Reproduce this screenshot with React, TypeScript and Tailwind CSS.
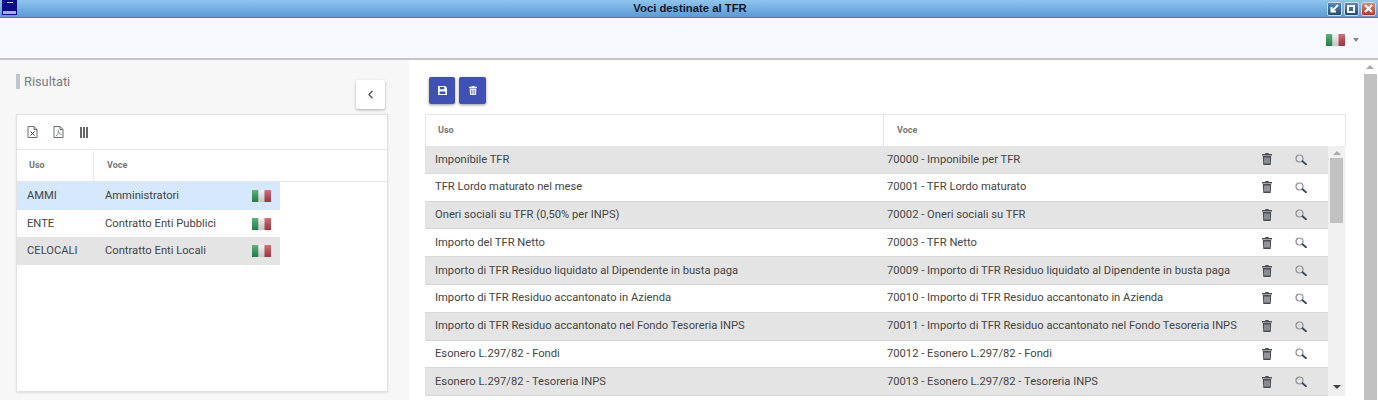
import { ChevronLeft } from 'lucide-react';

const results = [
  { code: 'AMMI', name: 'Amministratori', bg: 'bg-[#d6e8fd]' },
  { code: 'ENTE', name: 'Contratto Enti Pubblici', bg: 'bg-white' },
  { code: 'CELOCALI', name: 'Contratto Enti Locali', bg: 'bg-[#e4e4e4]' },
];

const rows = [
  ['Imponibile TFR', '70000 - Imponibile per TFR'],
  ['TFR Lordo maturato nel mese', '70001 - TFR Lordo maturato'],
  ['Oneri sociali su TFR (0,50% per INPS)', '70002 - Oneri sociali su TFR'],
  ['Importo del TFR Netto', '70003 - TFR Netto'],
  ['Importo di TFR Residuo liquidato al Dipendente in busta paga', '70009 - Importo di TFR Residuo liquidato al Dipendente in busta paga'],
  ['Importo di TFR Residuo accantonato in Azienda', '70010 - Importo di TFR Residuo accantonato in Azienda'],
  ['Importo di TFR Residuo accantonato nel Fondo Tesoreria INPS', '70011 - Importo di TFR Residuo accantonato nel Fondo Tesoreria INPS'],
  ['Esonero L.297/82 - Fondi', '70012 - Esonero L.297/82 - Fondi'],
  ['Esonero L.297/82 - Tesoreria INPS', '70013 - Esonero L.297/82 - Tesoreria INPS'],
];

function Flag() {
  return (
    <svg width="19" height="12" viewBox="0 0 19 12" className="shrink-0">
      <defs>
        <linearGradient id="flagShade" x1="0" y1="0" x2="0" y2="1">
          <stop offset="0" stopColor="#fff" stopOpacity="0.25" />
          <stop offset="1" stopColor="#000" stopOpacity="0.18" />
        </linearGradient>
      </defs>
      <rect width="6.5" height="12" fill="#2f9a57" />
      <rect x="6.5" width="6" height="12" fill="#f4f4f4" />
      <rect x="12.5" width="6.5" height="12" fill="#c5434b" />
      <rect width="19" height="12" fill="url(#flagShade)" />
    </svg>
  );
}

function WinButton({ children, className }: { children: React.ReactNode; className: string }) {
  return (
    <div className={`flex h-[14px] w-[15px] items-center justify-center rounded-[2px] border border-[#c9d8e6] ${className}`}>
      {children}
    </div>
  );
}

function ExportIcon({ label }: { label: string }) {
  return (
    <svg width="11" height="12" viewBox="0 0 11 12" fill="none" stroke="#6b6b78" strokeWidth="1">
      <path d="M1 .5h6l3 3v8H1z" />
      <path d="M7 .5v3h3" />
      {label === 'x' ? (
        <path d="M3.500 5.500l4 4M7.500 5.500l-4 4" stroke="#333" />
      ) : (
        <path d="M3 10c1.500-1 3-4 2.500-5.500C5 6 6.500 8.500 8.500 8.500" stroke="#8a8a94" />
      )}
    </svg>
  );
}

function TrashIcon({ color = '#4a4f57', slot = '#e4e4e4', size = 10 }: { color?: string; slot?: string; size?: number }) {
  return (
    <svg width={size} height={size * 1.2} viewBox="0 0 10 12">
      <path d="M3.500 0h3l.5 1h3v1.500H0V1h3z" fill={color} />
      <path d="M.8 3h8.400l-.5 9H1.300z" fill={color} />
      <path d="M3 4.500v6M5 4.500v6M7 4.500v6" stroke={slot} strokeWidth=".8" />
    </svg>
  );
}

function LensIcon() {
  return (
    <svg width="12" height="11" viewBox="0 0 12 11" fill="none">
      <circle cx="4.500" cy="4.500" r="3.500" stroke="#8d8f94" strokeWidth="1.200" />
      <path d="M7.500 7.300l3.500 3" stroke="#3c4654" strokeWidth="1.800" strokeLinecap="round" />
    </svg>
  );
}

function SaveIcon() {
  return (
    <svg width="9" height="9" viewBox="0 0 10 10">
      <path fillRule="evenodd" d="M0 0h8l2 2v8H0zM2 1v2.500h5V1zM1.800 6v3h6.400V6z" fill="#fff" />
    </svg>
  );
}

export default function App() {
  return (
    <div className="flex h-[400px] flex-col overflow-hidden bg-white font-['Roboto',sans-serif] text-[11.2px] text-[#444]">
      {/* Barra del titolo */}
      <div className="flex h-[18px] shrink-0 items-center justify-between border-b border-[#3f7fbc] bg-gradient-to-b from-[#8fc4ee] to-[#5b9bd6]">
        <div className="flex h-[17px] w-[53px] pl-[2px]">
          <div className="flex h-[15px] w-[15px] flex-col items-center justify-between bg-[#0b0b8c] pt-[2px] pb-[1px]">
            <div className="h-px w-[6px] bg-[#c6c6ee]" />
            <div className="h-[3px] w-[13px] bg-[#a9a9e4]" />
          </div>
        </div>
        <span className="font-['Liberation_Sans',sans-serif] text-[11.300px] font-bold text-[#101828]">Voci destinate al TFR</span>
        <div className="flex gap-[2px] pr-[2px]">
          <WinButton className="bg-gradient-to-b from-[#5f88ae] to-[#244d75]">
            <svg width="9" height="9" viewBox="0 0 9 9" stroke="#fff" strokeWidth="2" fill="none">
              <path d="M8 1L2 7M1.500 3v4.500H6" />
            </svg>
          </WinButton>
          <WinButton className="bg-gradient-to-b from-[#5f88ae] to-[#244d75]">
            <div className="h-[8px] w-[8px] border-2 border-white" />
          </WinButton>
          <WinButton className="bg-gradient-to-b from-[#d98a72] to-[#a83d28]">
            <svg width="9" height="9" viewBox="0 0 9 9" stroke="#fff" strokeWidth="2.200">
              <path d="M1 1l7 7M8 1L1 8" />
            </svg>
          </WinButton>
        </div>
      </div>

      {/* Intestazione con lingua */}
      <div className="flex h-[42px] shrink-0 items-center justify-end gap-[8px] border-b-2 border-[#c4c4c4] bg-[#f8f9fe] pt-[3px] pr-[19px]">
        <Flag />
        <div className="h-0 w-0 border-x-[3px] border-t-[4px] border-x-transparent border-t-[#888]" />
      </div>

      <div className="flex min-h-0 flex-1">
        {/* Colonna risultati */}
        <div className="w-[409px] shrink-0 bg-[#f7f7f7] pl-4 pt-[14px]">
          <div className="flex w-[369px] items-start justify-between">
            <div className="flex h-[15px] items-center gap-1">
              <div className="h-[15px] w-1 bg-[#c2c5cb]" />
              <span className="pt-[1px] text-[12.800px] text-[#777b85]">Risultati</span>
            </div>
            <button type="button" className="mt-[6px] flex h-[29px] w-[29px] items-center justify-center rounded-[2px] bg-white shadow-[0_1px_3px_rgba(0,0,0,0.3)]">
              <ChevronLeft size={13} strokeWidth={2.500} className="text-[#555]" />
            </button>
          </div>
          <div className="mt-[5px] h-[278px] w-[372px] border border-[#e2e2e2] bg-white shadow-[0_1px_2px_rgba(0,0,0,0.1)]">
            <div className="flex h-[35px] items-center gap-[15px] border-b border-[#e6e6e6] pl-[10px]">
              <ExportIcon label="x" />
              <ExportIcon label="p" />
              <div className="ml-[1px] flex gap-px">
                <div className="h-[11px] w-[2px] bg-[#666]" />
                <div className="h-[11px] w-[2px] bg-[#666]" />
                <div className="h-[11px] w-[2px] bg-[#666]" />
              </div>
            </div>
            <div className="flex h-[32px] items-center border-b border-[#e6e6e6] pt-[1px] text-[9px] font-bold text-[#777]">
              <div className="flex h-full w-[77px] items-center border-r border-[#e6e6e6] pl-3">Uso</div>
              <div className="pl-[13px]">Voce</div>
            </div>
            {results.map((r) => (
              <div key={r.code} className={`flex h-[27.700px] w-[263px] items-center ${r.bg}`}>
                <div className="w-[78px] pl-[10px] pt-[1px]">{r.code}</div>
                <div className="flex-1 pl-[10px] pt-[1px]">{r.name}</div>
                <div className="pr-[9px]">
                  <Flag />
                </div>
              </div>
            ))}
          </div>
        </div>

        {/* Dettaglio voci */}
        <div className="min-w-0 flex-1 pl-4 pt-[17px]">
          <div className="flex gap-1 pl-1">
            <button type="button" className="flex h-[27px] w-[26px] items-center justify-center rounded-[2px] bg-[#3f51b5] shadow-[0_1px_3px_rgba(0,0,0,0.4)]">
              <SaveIcon />
            </button>
            <button type="button" className="flex h-[27px] w-[27px] items-center justify-center rounded-[2px] bg-[#3f51b5] shadow-[0_1px_3px_rgba(0,0,0,0.4)]">
              <TrashIcon color="#fff" slot="#3f51b5" size={8} />
            </button>
          </div>
          <div className="mt-[10px] w-[921px]">
            <div className="flex h-[32px] items-center border border-b-0 border-[#e6e6e6] text-[9px] font-bold text-[#777]">
              <div className="flex h-[32px] w-[458px] items-center border-r border-[#e6e6e6] pl-3">Uso</div>
              <div className="pl-[13px]">Voce</div>
            </div>
            <div className="flex h-[250px] items-stretch border-b border-[#eeeeee]">
              <div className="w-[903px] shrink-0">
                {rows.map(([uso, voce], i) => (
                  <div key={voce} className={`flex h-[27.800px] items-center border-b border-[#d8d8d8] ${i % 2 === 0 ? 'bg-[#e4e4e4]' : 'bg-white'}`}>
                    <div className="w-[462px] shrink-0 truncate pl-[10px] pt-[1px]">{uso}</div>
                    <div className="w-[370px] shrink-0 truncate pr-2 pt-[1px]">{voce}</div>
                    <div className="flex w-[71px] items-center gap-[23px] pl-[5px]">
                      <TrashIcon slot={i % 2 === 0 ? '#e4e4e4' : '#ffffff'} />
                      <LensIcon />
                    </div>
                  </div>
                ))}
              </div>
              <div className="flex w-[17px] flex-col items-center bg-[#f0f0f0]">
                <div className="mt-[5px] h-0 w-0 border-x-[4px] border-b-[4px] border-x-transparent border-b-[#aaa]" />
                <div className="mt-[3px] h-[65px] w-[13px] bg-[#c1c1c1]" />
                <div className="mt-auto mb-[6px] h-0 w-0 border-x-[4px] border-t-[4px] border-x-transparent border-t-[#444]" />
              </div>
            </div>
          </div>
        </div>

        {/* Barra di scorrimento pagina */}
        <div className="flex w-[16px] shrink-0 flex-col items-center self-stretch pt-[5px]">
          <div className="h-0 w-0 border-x-[4px] border-b-[4px] border-x-transparent border-b-[#aaa]" />
          <div className="mt-[5px] w-[13px] flex-1 bg-[#c1c1c1]" />
        </div>
      </div>
    </div>
  );
}
